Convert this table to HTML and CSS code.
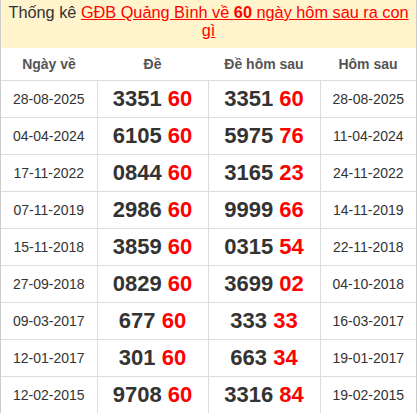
FILE: index.html
```html
<!DOCTYPE html>
<html>
<head>
<meta charset="utf-8">
<link rel="stylesheet" href="styles.css">
</head>
<body>
<div class="wrap">
  <div class="title">Thống kê <a href="#" class="link">GĐB Quảng Bình về <b>60</b> ngày hôm sau ra con gì</a></div>
  <table class="stats">
    <colgroup>
      <col class="c1"><col class="c2"><col class="c3"><col class="c4">
    </colgroup>
    <thead>
      <tr><th>Ngày về</th><th>Đề</th><th>Đề hôm sau</th><th>Hôm sau</th></tr>
    </thead>
    <tbody>
      <tr><td class="date">28-08-2025</td><td class="num">3351 <span class="red">60</span></td><td class="num">3351 <span class="red">60</span></td><td class="date">28-08-2025</td></tr>
      <tr><td class="date">04-04-2024</td><td class="num">6105 <span class="red">60</span></td><td class="num">5975 <span class="red">76</span></td><td class="date">11-04-2024</td></tr>
      <tr><td class="date">17-11-2022</td><td class="num">0844 <span class="red">60</span></td><td class="num">3165 <span class="red">23</span></td><td class="date">24-11-2022</td></tr>
      <tr><td class="date">07-11-2019</td><td class="num">2986 <span class="red">60</span></td><td class="num">9999 <span class="red">66</span></td><td class="date">14-11-2019</td></tr>
      <tr><td class="date">15-11-2018</td><td class="num">3859 <span class="red">60</span></td><td class="num">0315 <span class="red">54</span></td><td class="date">22-11-2018</td></tr>
      <tr><td class="date">27-09-2018</td><td class="num">0829 <span class="red">60</span></td><td class="num">3699 <span class="red">02</span></td><td class="date">04-10-2018</td></tr>
      <tr><td class="date">09-03-2017</td><td class="num">677 <span class="red">60</span></td><td class="num">333 <span class="red">33</span></td><td class="date">16-03-2017</td></tr>
      <tr><td class="date">12-01-2017</td><td class="num">301 <span class="red">60</span></td><td class="num">663 <span class="red">34</span></td><td class="date">19-01-2017</td></tr>
      <tr><td class="date">12-02-2015</td><td class="num">9708 <span class="red">60</span></td><td class="num">3316 <span class="red">84</span></td><td class="date">19-02-2015</td></tr>
    </tbody>
  </table>
</div>
</body>
</html>
```

FILE: styles.css
```css
html, body {
  margin: 0;
  padding: 0;
  background: #fff;
  font-family: "Liberation Sans", Arial, sans-serif;
}
.wrap {
  width: 417px;
  box-sizing: border-box;
  border-left: 1px solid #ccc;
  border-right: 1px solid #ccc;
  border-bottom: 1px solid #ccc;
}
.title {
  background: #fff4cc;
  color: #333;
  font-size: 16.3px;
  line-height: 18px;
  text-align: center;
  padding: 3px 4px 0;
  height: 45px;
}
.link {
  color: #f00;
  text-decoration: underline;
}
.link b {
  font-weight: bold;
}
.stats {
  width: 415px;
  border-collapse: collapse;
  table-layout: fixed;
}
.c1 { width: 96px; }
.c2 { width: 111px; }
.c3 { width: 112px; }
.c4 { width: 96px; }
.stats th {
  height: 32px;
  padding: 0;
  font-size: 14px;
  font-weight: bold;
  color: #555;
  text-align: center;
  border-bottom: 1px solid #ddd;
  vertical-align: middle;
}
.stats td {
  height: 36px;
  padding: 0;
  text-align: center;
  vertical-align: middle;
  border: 1px solid #ddd;
  color: #333;
}
.stats tr td:first-child { border-left: none; }
.stats tr td:last-child { border-right: none; }
.stats tbody tr:last-child td { border-bottom: none; }
.date {
  font-size: 14px;
}
.num {
  font-size: 22px;
  font-weight: bold;
}
.red {
  color: #f00;
}
```
